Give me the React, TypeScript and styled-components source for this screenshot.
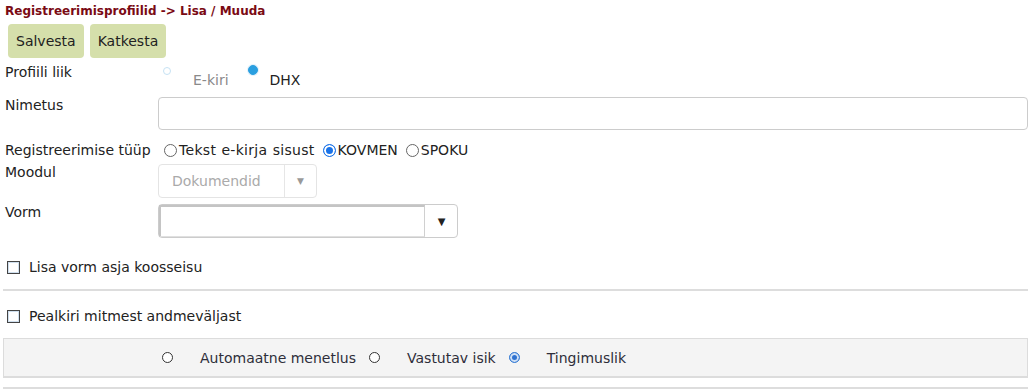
import React from 'react';
import styled, { createGlobalStyle } from 'styled-components';

const Global = createGlobalStyle`
  body {
    margin: 0;
    background: #fff;
    font-family: "DejaVu Sans", Verdana, sans-serif;
    font-size: 14px;
    color: #222;
  }
`;

const Page = styled.div`
  padding: 4px 3px 0 5px;
  width: 1031px;
  box-sizing: border-box;
  display: flex;
  flex-direction: column;
`;

const Crumb = styled.div`
  font-size: 12px;
  font-weight: bold;
  color: #7a0a14;
  line-height: 15px;
  margin-bottom: 5px;
`;

const Toolbar = styled.div`
  display: flex;
  gap: 6px;
  padding-left: 3px;
  margin-bottom: 4px;
`;

const Button = styled.button`
  font: inherit;
  font-size: 14px;
  color: #222;
  background: #d5dfab;
  border: none;
  border-radius: 4px;
  height: 34px;
  padding: 0 8px;
`;

const Row = styled.div<{ $h: number }>`
  display: flex;
  align-items: flex-start;
  height: ${p => p.$h}px;
  flex: none;
`;

const Label = styled.div<{ $shift?: number }>`
  width: 153px;
  flex: none;
  line-height: 18px;
  margin-top: ${p => p.$shift ?? 0}px;
`;

const ProfileChoice = styled.div`
  display: flex;
  align-items: flex-start;
  padding-left: 5px;
`;

const ProfileText = styled.span<{ $muted?: boolean; $l: number; $r: number }>`
  color: ${p => (p.$muted ? '#8a8a8a' : '#222')};
  margin: 10px ${p => p.$r}px 0 ${p => p.$l}px;
  line-height: 16px;
`;

const PaleDot = styled.span<{ $on?: boolean }>`
  display: inline-block;
  flex: none;
  width: ${p => (p.$on ? 10 : 8)}px;
  height: ${p => (p.$on ? 10 : 8)}px;
  margin-top: ${p => (p.$on ? 3 : 5)}px;
  border-radius: 50%;
  box-sizing: border-box;
  border: 1px solid ${p => (p.$on ? '#2a9fe0' : '#c6e2f4')};
  background: ${p => (p.$on ? '#2a9fe0' : '#fff')};
  box-shadow: ${p => (p.$on ? '0 0 0 1px #e2f1fb' : 'none')};
`;

const TextInput = styled.div`
  flex: 1;
  height: 33px;
  box-sizing: border-box;
  border: 1px solid #ccc;
  border-radius: 4px;
`;

const Options = styled.div`
  display: flex;
  align-items: center;
  margin-left: 6px;
  line-height: 18px;
`;

const Radio = styled.span<{ $on?: boolean }>`
  display: inline-block;
  box-sizing: border-box;
  width: 13px;
  height: 13px;
  border-radius: 50%;
  flex: none;
  border: 1px solid ${p => (p.$on ? '#1a73e8' : '#666')};
  background: ${p => (p.$on ? '#1a73e8' : '#fff')};
  box-shadow: ${p => (p.$on ? 'inset 0 0 0 2px #fff' : 'none')};
`;

const Opt = styled.span<{ $wide?: boolean }>`
  margin: 0 8px 0 2px;
  letter-spacing: ${p => (p.$wide ? '0.3px' : '0')};
  word-spacing: ${p => (p.$wide ? '0.5px' : '0')};
`;

const Select = styled.div<{ $w: number; $disabled?: boolean }>`
  display: flex;
  width: ${p => p.$w}px;
  height: 34px;
  box-sizing: border-box;
  border: 1px solid ${p => (p.$disabled ? '#e4e4e4' : '#ccc')};
  border-radius: 4px;
  margin-top: 1px;
  color: ${p => (p.$disabled ? '#aaa' : '#222')};
`;

const SelectValue = styled.div<{ $inset?: boolean }>`
  flex: 1;
  padding-left: 13px;
  line-height: 32px;
  ${p =>
    p.$inset &&
    `border-top: 2px solid #c4c4c4; border-left: 2px solid #c4c4c4; border-bottom: 1px solid #e0e0e0; border-right: 1px solid #d0d0d0;`}
`;

const Arrow = styled.div<{ $disabled?: boolean }>`
  width: 31px;
  display: flex;
  align-items: center;
  justify-content: center;
  border-left: 1px solid ${p => (p.$disabled ? '#e6e6e6' : 'transparent')};
  color: ${p => (p.$disabled ? '#999' : '#222')};
  font-size: ${p => (p.$disabled ? 9 : 10)}px;
`;

const CheckRow = styled.label`
  display: flex;
  align-items: center;
  gap: 9px;
  padding-left: 2px;
  height: 18px;
  flex: none;
`;

const Box = styled.span`
  width: 13px;
  height: 13px;
  box-sizing: border-box;
  border: 1px solid #444;
  box-shadow: inset 0 0 0 1px #cfdfee;
  flex: none;
`;

const Spacer = styled.div<{ $h: number }>`
  height: ${p => p.$h}px;
  flex: none;
`;

const Rule = styled.hr`
  border: none;
  border-top: 2px solid #ddd;
  margin: 0 0 0 -2px;
  flex: none;
`;

const Panel = styled.div`
  display: flex;
  align-items: center;
  height: 40px;
  flex: none;
  box-sizing: border-box;
  margin-left: -2px;
  background: #f4f4f4;
  border: 1px solid #dcdcdc;
  border-bottom: 2px solid #dcdcdc;
  padding-left: 158px;
  color: #2e2e3a;
`;

const SmallRadio = styled.span<{ $on?: boolean }>`
  display: inline-block;
  box-sizing: border-box;
  width: 11px;
  height: 11px;
  border-radius: 50%;
  flex: none;
  border: 1px solid ${p => (p.$on ? '#3b7fd6' : '#333')};
  background: ${p => (p.$on ? '#2f72d0' : '#fff')};
  box-shadow: ${p => (p.$on ? 'inset 0 0 0 2px #cfe0f5' : 'none')};
`;

const PanelText = styled.span`
  margin: 0 13px 0 27px;
`;

export default function App() {
  return (
    <>
      <Global />
      <Page>
        <Crumb>Registreerimisprofiilid -&gt; Lisa / Muuda</Crumb>
        <Toolbar>
          <Button>Salvesta</Button>
          <Button>Katkesta</Button>
        </Toolbar>
        <Row $h={35}>
          <Label $shift={1}>Profiili liik</Label>
          <ProfileChoice>
            <PaleDot />
            <ProfileText $muted $l={22} $r={19}>
              E-kiri
            </ProfileText>
            <PaleDot $on />
            <ProfileText $l={12} $r={0}>
              DHX
            </ProfileText>
          </ProfileChoice>
        </Row>
        <Row $h={44}>
          <Label $shift={-1}>Nimetus</Label>
          <TextInput />
        </Row>
        <Row $h={22}>
          <Label>Registreerimise tüüp</Label>
          <Options>
            <Radio />
            <Opt $wide>Tekst e-kirja sisust</Opt>
            <Radio $on />
            <Opt>KOVMEN</Opt>
            <Radio />
            <Opt>SPOKU</Opt>
          </Options>
        </Row>
        <Row $h={40}>
          <Label>Moodul</Label>
          <Select $w={159} $disabled>
            <SelectValue>Dokumendid</SelectValue>
            <Arrow $disabled>▼</Arrow>
          </Select>
        </Row>
        <Row $h={55}>
          <Label>Vorm</Label>
          <Select $w={300}>
            <SelectValue $inset />
            <Arrow>▼</Arrow>
          </Select>
        </Row>
        <CheckRow>
          <Box />
          Lisa vorm asja koosseisu
        </CheckRow>
        <Spacer $h={13} />
        <Rule />
        <Spacer $h={16} />
        <CheckRow>
          <Box />
          Pealkiri mitmest andmeväljast
        </CheckRow>
        <Spacer $h={13} />
        <Panel>
          <SmallRadio />
          <PanelText>Automaatne menetlus</PanelText>
          <SmallRadio />
          <PanelText>Vastutav isik</PanelText>
          <SmallRadio $on />
          <PanelText>Tingimuslik</PanelText>
        </Panel>
        <Spacer $h={9} />
        <Rule />
      </Page>
    </>
  );
}
